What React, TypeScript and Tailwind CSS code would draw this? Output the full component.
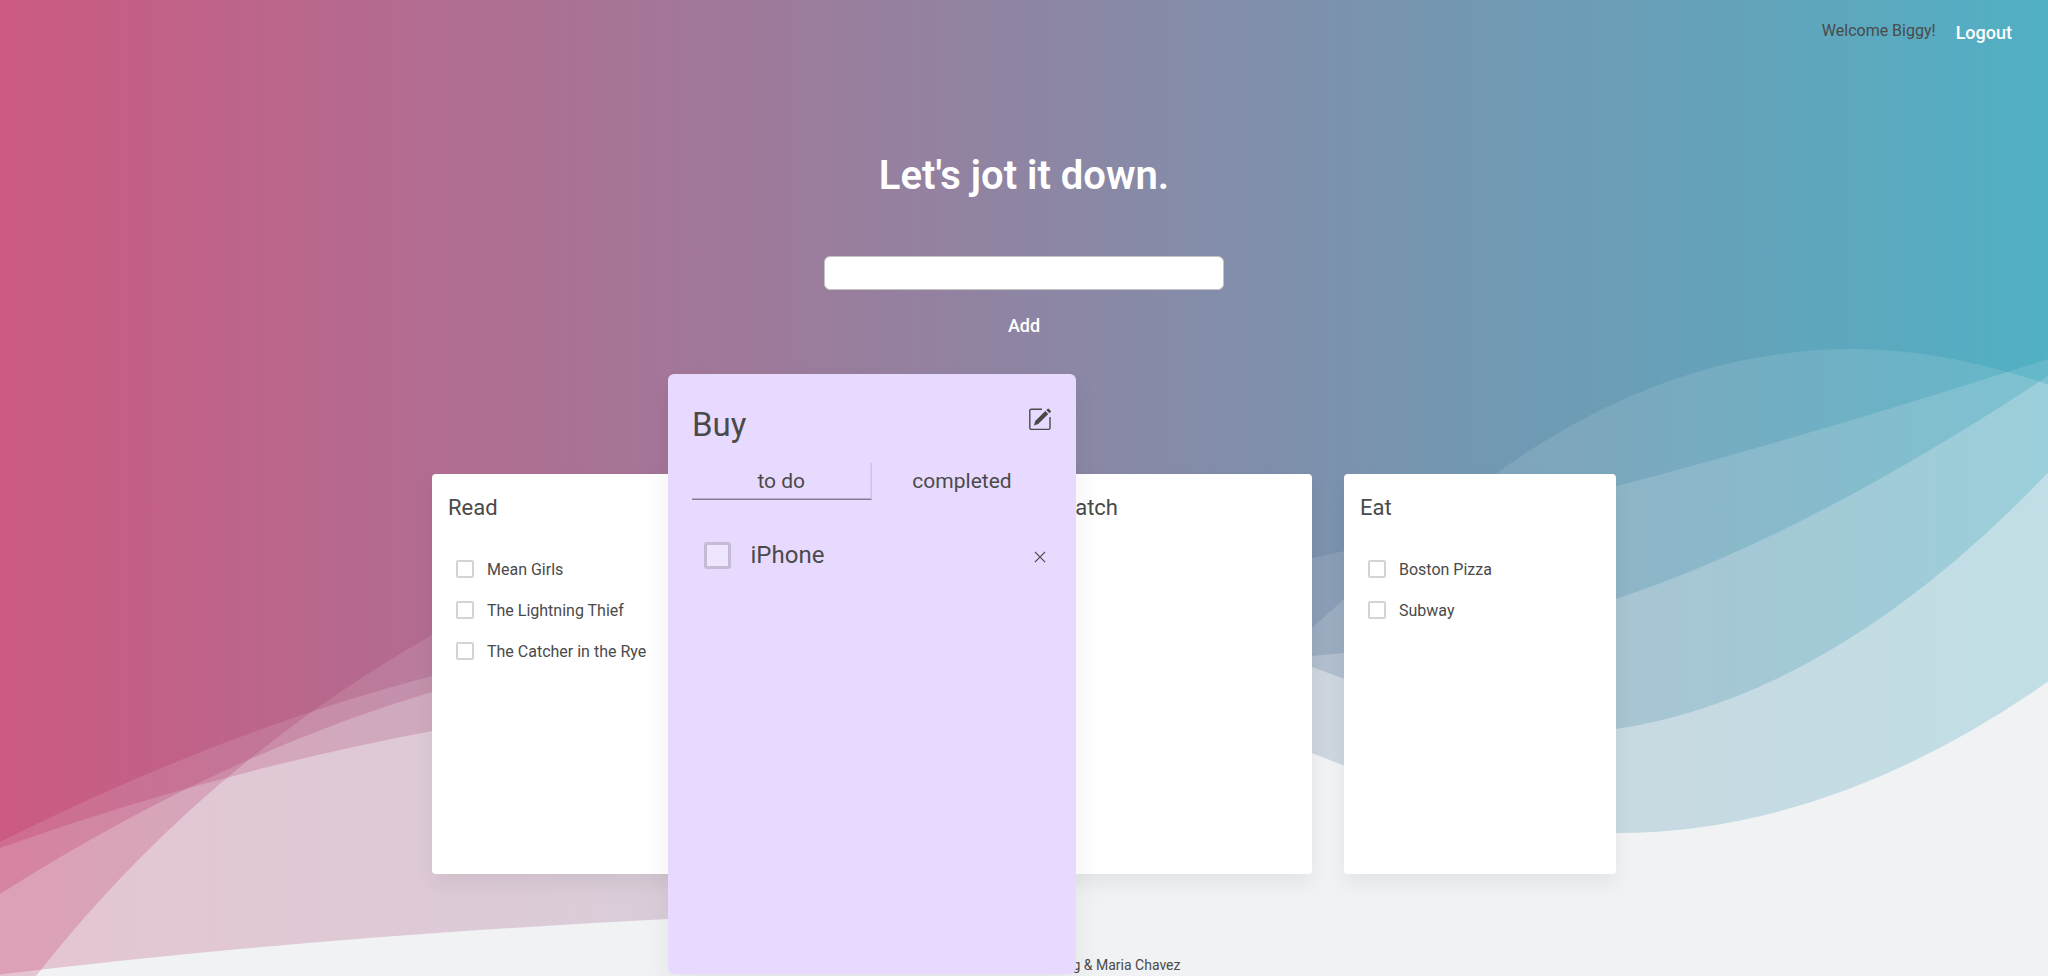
import React from "react";

const WAVES = [
  "M0 842Q224 730 432 676C650 620 1100 585 1312 667Q1511 742 1616 729Q1835 696 2048 472.5V0H0Z",
  "M0 848Q206 774 432 731C700 690 1050 680 1312 656Q1485 642 1616 599Q1804 537 2048 376V0H0Z",
  "M0 894Q219 755 432 692C700 620 1000 620 1312 558Q1654 487 2048 359V0H0Z",
  "M0 1022L36 976Q199 768 432 635C700 500 1050 660 1312 753Q1512 833 1616 833Q1832 833 2048 681.6V0H0Z",
  "M0 974.5Q308 937 668 919C900 900 1200 740 1312 628Q1433 519 1497 473Q1669 349 1854 349Q1942 349 2048 384.4V0H0Z",
];

function Backdrop() {
  return (
    <svg className="absolute inset-0 h-[976px] w-[2048px]" viewBox="0 0 2048 976" aria-hidden="true">
      <defs>
        <linearGradient id="sky" gradientUnits="userSpaceOnUse" x1="0" y1="0" x2="2048" y2="0">
          <stop offset="0" stopColor="#ba104b" />
          <stop offset="1" stopColor="#0390ad" />
        </linearGradient>
      </defs>
      {WAVES.map((d) => (
        <path key={d} d={d} fill="url(#sky)" fillOpacity="0.2" />
      ))}
    </svg>
  );
}

function EditIcon() {
  return (
    <svg className="mr-[0.3px] mt-[2.5px] h-[16px] w-[16px]" viewBox="0 0 24 24" fill="none" aria-hidden="true">
      <path d="M14 2.200H3.200A1.400 1.400 0 0 0 1.800 3.600v17.400a1.400 1.400 0 0 0 1.400 1.400h17.400a1.400 1.400 0 0 0 1.400-1.400V10" stroke="#4a4a4a" strokeWidth="1.400" />
      <path d="M6 18.400l1.200-4.400L17.300 4l3 3L10.200 17.100zM18.300 3.100l1.200-1.200a1 1 0 0 1 1.400 0l1.700 1.700a1 1 0 0 1 0 1.400l-1.200 1.200z" fill="#4a4a4a" />
    </svg>
  );
}

function CloseIcon() {
  return (
    <svg className="mt-[2px] h-[8px] w-[8px]" viewBox="0 0 8 8" aria-hidden="true">
      <path d="M.6.6l6.800 6.800M7.400.6L.6 7.400" stroke="#4a4a4a" strokeWidth=".8" fill="none" />
    </svg>
  );
}

function Item({ label, removable }: { label: string; removable?: boolean }) {
  return (
    <li className="flex h-[41px] items-center pl-2 pr-[4px]">
      <span
        className={
          removable
            ? "mr-[13px] h-[18px] w-[18px] rounded-[2px] border-2 border-[#c6bbd6] bg-[#eee5fe]"
            : "mr-[13px] h-[18px] w-[18px] rounded-[2px] border-2 border-[#d4d4d4] bg-white"
        }
      />
      <span className={removable ? "flex-1 whitespace-nowrap" : "flex-1 whitespace-nowrap pt-[2px]"}>{label}</span>
      {removable && <CloseIcon />}
    </li>
  );
}

function Card({ title, items }: { title: string; items: string[] }) {
  return (
    <section className="h-[400px] w-[272px] rounded-[4px] bg-white px-4 pt-[19px] shadow-[0_10px_20px_rgba(0,0,0,0.06)]">
      <h2 className="h-[55px] text-[22px] leading-[30px]">{title}</h2>
      <ul>
        {items.map((i) => (
          <Item key={i} label={i} />
        ))}
      </ul>
    </section>
  );
}

function ActiveCard() {
  return (
    <section className="z-10 h-[400px] w-[272px] scale-150 rounded-[4px] bg-[#e8daff] px-4 pt-[19px] shadow-[0_10px_20px_rgba(0,0,0,0.06)]">
      <div className="flex h-[40px] justify-between">
        <h2 className="text-[22px] leading-[30px]">Buy</h2>
        <EditIcon />
      </div>
      <div className="flex h-[41px] text-center text-sm leading-[24px]">
        <div className="h-[25px] w-[120px] border-b border-r border-b-[#857c92] border-r-[#cfc2e2]">to do</div>
        <div className="w-[120px]">completed</div>
      </div>
      <ul>
        <Item label="iPhone" removable />
      </ul>
    </section>
  );
}

export default function App() {
  return (
    <div className="relative h-[976px] w-[2048px] overflow-hidden bg-[#f0f2f4] font-['Roboto',sans-serif] text-base text-[#4a4a4a]">
      <Backdrop />
      <div className="relative flex h-full flex-col items-center">
        <header className="flex h-[60px] w-full justify-end gap-5 pr-9 pt-[18px]">
          <span className="leading-[26px]">Welcome Biggy!</span>
          <a className="text-[18px] font-medium leading-[30px] text-white">Logout</a>
        </header>
        <h1 className="mt-[91px] text-[40px] font-semibold leading-[50px] text-white">Let's jot it down.</h1>
        <input className="mt-[55px] h-[34px] w-[400px] rounded-[6px] border border-[#c4c4c4] bg-white px-3 outline-none" />
        <button className="mt-[22px] text-[18px] font-medium leading-[28px] text-white">Add</button>
        <main className="mt-[134px] flex gap-8">
          <Card title="Read" items={["Mean Girls", "The Lightning Thief", "The Catcher in the Rye"]} />
          <ActiveCard />
          <Card title="Watch" items={[]} />
          <Card title="Eat" items={["Boston Pizza", "Subway"]} />
        </main>
        <footer className="mt-[81px] w-[313px] whitespace-nowrap text-right text-sm leading-[20px]">Ng &amp; Maria Chavez</footer>
      </div>
    </div>
  );
}
